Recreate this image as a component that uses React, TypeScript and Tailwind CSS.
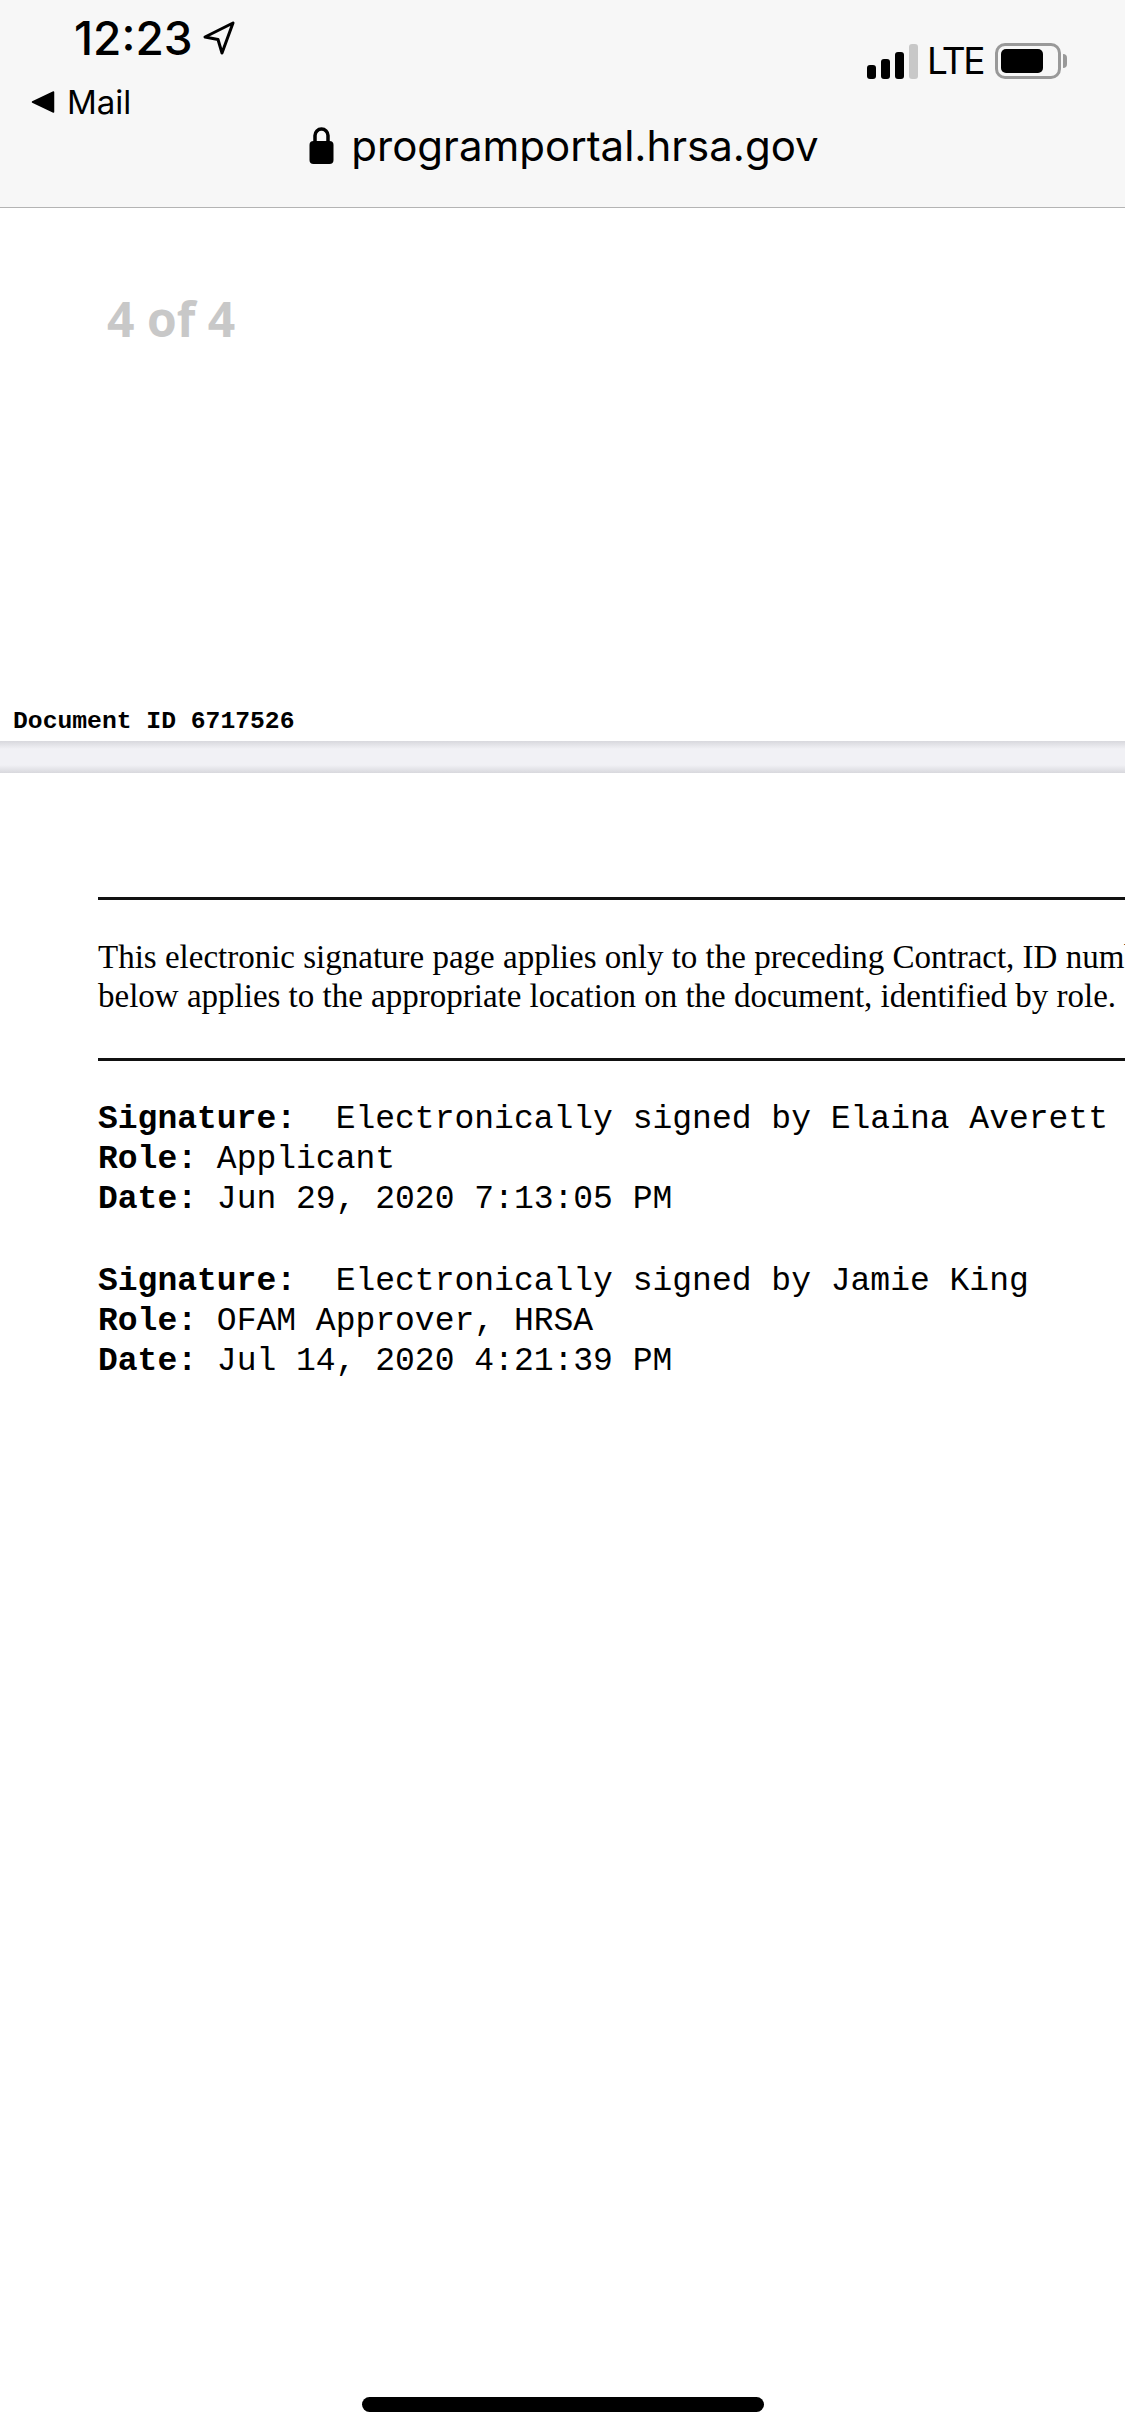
const mono = "font-['Liberation_Mono',monospace]";

function StatusIcons() {
  return (
    <div className="flex items-center">
      <div className="flex items-end gap-[5px] h-[35px]">
        <div className="w-[9px] h-[14px] rounded-[3px] bg-black" />
        <div className="w-[9px] h-[20px] rounded-[3px] bg-black" />
        <div className="w-[9px] h-[27px] rounded-[3px] bg-black" />
        <div className="w-[9px] h-[35px] rounded-[3px] bg-[#c8c8c8]" />
      </div>
      <span className="ml-[9px] text-[37px] leading-[36px] font-['Inter',sans-serif] text-black tracking-[-2.5px]">LTE</span>
      <div className="ml-[12px] flex items-center">
        <div className="w-[66px] h-[36px] rounded-[10px] border-[3px] border-[#999999] p-[3px]">
          <div className="w-[42px] h-full rounded-[5px] bg-black" />
        </div>
        <div className="ml-[2px] w-[4px] h-[14px] rounded-r-[4px] bg-[#999999]" />
      </div>
    </div>
  );
}

function Signature({ name, role, date }: { name: string; role: string; date: string }) {
  return (
    <div className={`${mono} text-[33px] leading-[39.8px] text-black whitespace-pre`}>
      <div><b>Signature:</b>{"  Electronically signed by " + name}</div>
      <div><b>Role:</b>{" " + role}</div>
      <div><b>Date:</b>{" " + date}</div>
    </div>
  );
}

export default function App() {
  return (
    <div className="relative w-[1125px] h-[2436px] overflow-hidden bg-white font-['Inter',sans-serif] text-black">
      {/* Status bar + url */}
      <div className="h-[208px] bg-[#f7f7f7] border-b border-[#b4b4b4] flex flex-col">
        <div className="flex justify-between items-start h-[84px]">
          <div className="flex flex-col">
            <div className="flex items-center pl-[74px] pt-[14px] h-[62px]">
              <span className="text-[46px] leading-[48px] font-medium">12:23</span>
              <svg className="ml-[9px]" width="34" height="36" viewBox="0 0 34 36" fill="none">
                <path d="M31 3 L3 17 L16 19.5 L20 33 Z" stroke="#000" strokeWidth="3" strokeLinejoin="round" />
              </svg>
            </div>
            <div className="flex items-center pl-[31px] mt-[22px]">
              <svg width="24" height="24" viewBox="0 0 24 24">
                <path d="M1.5 12 L22.5 2 V22 Z" fill="#000" stroke="#000" strokeWidth="1.5" strokeLinejoin="round" />
              </svg>
              <span className="ml-[12px] text-[33px] leading-[36px]">Mail</span>
            </div>
          </div>
          <div className="pt-[43px] pr-[58px]">
            <StatusIcons />
          </div>
        </div>
        <div className="flex justify-center items-center mt-[36px] pl-[3px]">
          <svg className="mb-[4px]" width="25" height="39" viewBox="0 0 25 39">
            <path d="M6 17 V10.5 a6.5 6.5 0 0 1 13 0 V17" fill="none" stroke="#000" strokeWidth="3.5" />
            <rect x="0.5" y="16" width="24" height="23" rx="4" fill="#000" />
          </svg>
          <span className="ml-[17px] text-[42px] leading-[52px]">programportal.hrsa.gov</span>
        </div>
      </div>

      {/* Page 4 of 4 */}
      <div className="h-[533px] flex flex-col justify-between">
        <div className="pl-[107px] pt-[83px] font-['Open_Sans',sans-serif] text-[48px] leading-[56px] font-bold text-[#c8c8c8]">4 of 4</div>
        <div className={`${mono} pl-[13px] pb-[6px] text-[24.7px] leading-[28px] font-bold`}>Document ID 6717526</div>
      </div>

      {/* Gap between PDF pages */}
      <div className="h-[32px] bg-[linear-gradient(#d8d8dd,#f1f1f5_25%,#f1f1f5_75%,#d8d8dd)]" />

      {/* Signature page */}
      <div className="pl-[98px] pt-[124px]">
        <div className="h-[3px] bg-[#111111]" />
        <div className="mt-[38px] font-['Liberation_Serif',serif] text-[33px] leading-[39px] whitespace-nowrap">
          <div>This electronic signature page applies only to the preceding Contract, ID number 6717526. Each signature</div>
          <div>below applies to the appropriate location on the document, identified by role.</div>
        </div>
        <div className="mt-[42px] h-[3px] bg-[#111111]" />
        <div className="mt-[39px] flex flex-col gap-[43px]">
          <Signature name="Elaina Averett" role="Applicant" date="Jun 29, 2020 7:13:05 PM" />
          <Signature name="Jamie King" role="OFAM Approver, HRSA" date="Jul 14, 2020 4:21:39 PM" />
        </div>
      </div>

      {/* Home indicator */}
      <div className="absolute left-[362px] top-[2397px] w-[402px] h-[15px] rounded-full bg-black" />
    </div>
  );
}
